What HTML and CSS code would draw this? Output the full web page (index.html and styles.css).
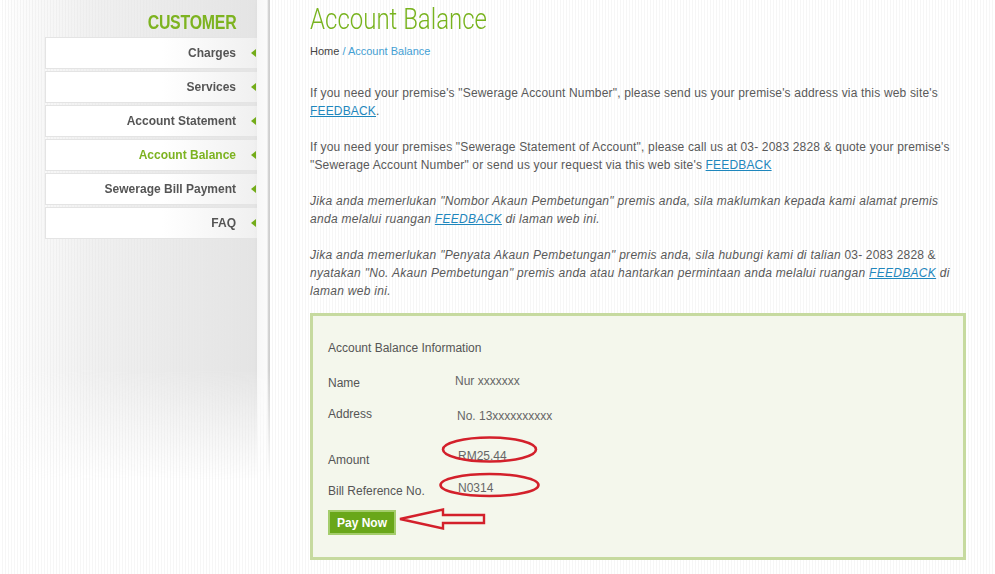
FILE: index.html
```html
<!DOCTYPE html>
<html>
<head>
<meta charset="utf-8">
<title>Account Balance</title>
<link rel="stylesheet" href="styles.css">
</head>
<body>
<div class="page">
  <aside class="sidebar">
    <div class="side-col">
      <h2 class="side-title"><span>CUSTOMER</span></h2>
      <ul class="menu">
        <li class="menu-item"><span>Charges</span><i class="arrow"></i></li>
        <li class="menu-item"><span>Services</span><i class="arrow"></i></li>
        <li class="menu-item"><span>Account Statement</span><i class="arrow"></i></li>
        <li class="menu-item active"><span>Account Balance</span><i class="arrow"></i></li>
        <li class="menu-item"><span>Sewerage Bill Payment</span><i class="arrow"></i></li>
        <li class="menu-item"><span>FAQ</span><i class="arrow"></i></li>
      </ul>
    </div>
    <div class="divider"></div>
  </aside>
  <main class="main">
    <h1 class="title"><span>Account Balance</span></h1>
    <div class="crumbs">Home <span class="crumb-cur">/ Account Balance</span></div>
    <p>If you need your premise's "Sewerage Account Number", please send us your premise's address via this web site's <a href="#">FEEDBACK</a>.</p>
    <p>If you need your premises "Sewerage Statement of Account", please call us at 03- 2083 2828 &amp; quote your premise's "Sewerage Account Number" or send us your request via this web site's <a href="#">FEEDBACK</a></p>
    <p class="it">Jika anda memerlukan "Nombor Akaun Pembetungan" premis anda, sila maklumkan kepada kami alamat premis anda melalui ruangan <a href="#">FEEDBACK</a> di laman web ini.</p>
    <p class="it">Jika anda memerlukan "Penyata Akaun Pembetungan" premis anda, sila hubungi kami di talian <span class="up">03- 2083 2828 &amp;</span> nyatakan "No. Akaun Pembetungan" premis anda atau hantarkan permintaan anda melalui ruangan <a href="#">FEEDBACK</a> di laman web ini.</p>

    <section class="info">
      <div class="info-title">Account Balance Information</div>
      <div class="row">
        <div class="lbl">Name</div>
        <div class="val v-name">Nur xxxxxxx</div>
      </div>
      <div class="row">
        <div class="lbl">Address</div>
        <div class="val v-addr">No. 13xxxxxxxxxx</div>
      </div>
      <div class="row row-amount">
        <div class="lbl">Amount</div>
        <div class="val v-amt">RM25.44</div>
      </div>
      <div class="row">
        <div class="lbl">Bill Reference No.</div>
        <div class="val v-ref">N0314</div>
      </div>
      <button class="pay">Pay Now</button>
      <svg class="marks" width="656" height="247" viewBox="0 0 656 247" aria-hidden="true">
        <ellipse cx="179.5" cy="136.5" rx="46.5" ry="12" fill="none" stroke="#d3202b" stroke-width="2.6"/>
        <ellipse cx="179.5" cy="172" rx="49" ry="11" fill="none" stroke="#d3202b" stroke-width="2.6"/>
        <path d="M90 206 L133 196.5 L133 202 L174 202 L174 210 L133 210 L133 215.5 Z" fill="none" stroke="#d3202b" stroke-width="2.4" stroke-linejoin="miter"/>
      </svg>
    </section>
  </main>
</div>
</body>
</html>
```

FILE: styles.css
```css
* { box-sizing: border-box; }

html, body {
  margin: 0;
  padding: 0;
}

body {
  width: 995px;
  height: 574px;
  overflow: hidden;
  font-family: "Liberation Sans", Arial, sans-serif;
  font-size: 12px;
  color: #595959;
  background: repeating-linear-gradient(to right, #ffffff 0, #ffffff 2px, #f6f6f6 2px, #f6f6f6 3px);
}

.page {
  display: flex;
  align-items: flex-start;
  height: 574px;
}

/* ---------- sidebar ---------- */
.sidebar {
  display: flex;
  width: 270px;
  height: 574px;
  flex-shrink: 0;
  -webkit-mask-image: linear-gradient(to bottom, #000 0, #000 370px, rgba(0,0,0,0) 480px);
  mask-image: linear-gradient(to bottom, #000 0, #000 370px, rgba(0,0,0,0) 480px);
}

.side-col {
  width: 257px;
  padding-left: 45px;
  background: linear-gradient(to right, rgba(228,228,228,0) 0, rgba(228,228,228,0.55) 90px, rgba(228,228,228,1) 257px);
  background-repeat: no-repeat;
}

.side-title {
  height: 37px;
  margin: 0;
  padding-right: 21px;
  text-align: right;
  font-family: "Liberation Sans", Arial, sans-serif;
  font-weight: bold;
  font-size: 21px;
  line-height: 43px;
  color: #7db320;
}

.side-title span {
  display: inline-block;
  transform: scaleX(0.756);
  transform-origin: right center;
  letter-spacing: -0.3px;
}

.menu {
  list-style: none;
  margin: 0;
  padding: 0;
}

.menu-item {
  display: flex;
  align-items: center;
  justify-content: flex-end;
  gap: 15px;
  height: 32px;
  margin-bottom: 2px;
  padding-right: 1px;
  border: 1px solid #e4e4e4;
  border-right: none;
  background: linear-gradient(to right, #ffffff 0, #ffffff 55%, #f0f0f0 100%);
  font-weight: bold;
  font-size: 12px;
  color: #555555;
}

.menu-item.active {
  color: #7db320;
}

.arrow {
  width: 0;
  height: 0;
  border-top: 4px solid transparent;
  border-bottom: 4px solid transparent;
  border-right: 5px solid #74ad1a;
}

.divider {
  width: 13px;
  height: 574px;
  background: linear-gradient(to right, #f7f7f7 0, #fbfbfb 10px, #e0e0e0 11px, #c9c9c9 12px, #d6d6d6 13px);
  box-shadow: 3px 0 6px rgba(0,0,0,0.10);
}

/* ---------- main ---------- */
.main {
  width: 696px;
  padding-left: 40px;
}

.title {
  margin: 0;
  height: 38px;
  font-family: Roboto, "Liberation Sans", sans-serif;
  font-weight: 300;
  font-size: 30px;
  line-height: 38px;
  color: #78b31e;
  white-space: nowrap;
}

.title span {
  display: inline-block;
  transform: scaleX(0.80);
  transform-origin: left center;
}

.crumbs {
  margin-top: 6px;
  font-size: 11px;
  line-height: 14px;
  color: #444444;
}

.crumb-cur {
  color: #44a0d4;
}

p {
  margin: 26px 0 0;
  line-height: 18px;
  color: #595959;
  letter-spacing: 0.17px;
}

p + p {
  margin-top: 18px;
}

p.it {
  font-style: italic;
  letter-spacing: 0.29px;
}

p.it .up {
  font-style: normal;
  letter-spacing: 0.17px;
}

a {
  color: #1f87bd;
  text-decoration: underline;
}

/* ---------- info box ---------- */
.info {
  position: relative;
  margin-top: 13px;
  width: 656px;
  height: 247px;
  padding: 23px 15px 0;
  border: 3px solid #c6da9f;
  background: #f4f7ec;
}

.info-title {
  line-height: 18px;
  color: #555555;
  margin-bottom: 17px;
}

.row {
  display: grid;
  grid-template-columns: 116px 1fr;
  height: 31px;
  line-height: 18px;
}

.row-amount {
  margin-top: 15px;
}

.lbl {
  color: #555555;
}

.val {
  color: #666666;
}

.v-name { padding-left: 11px; margin-top: -2px; }
.v-addr { padding-left: 13px; margin-top: 2px; }
.v-amt  { padding-left: 14px; margin-top: -4px; }
.v-ref  { padding-left: 14px; margin-top: -3px; }

.pay {
  display: block;
  margin-top: -3px;
  width: 68px;
  height: 25px;
  padding: 0;
  border: 2px solid #a4cd6c;
  background: #69a71a;
  color: #ffffff;
  font-family: "Liberation Sans", Arial, sans-serif;
  font-weight: bold;
  font-size: 12px;
  cursor: pointer;
}

.marks {
  position: absolute;
  left: -3px;
  top: -3px;
  pointer-events: none;
}
```
